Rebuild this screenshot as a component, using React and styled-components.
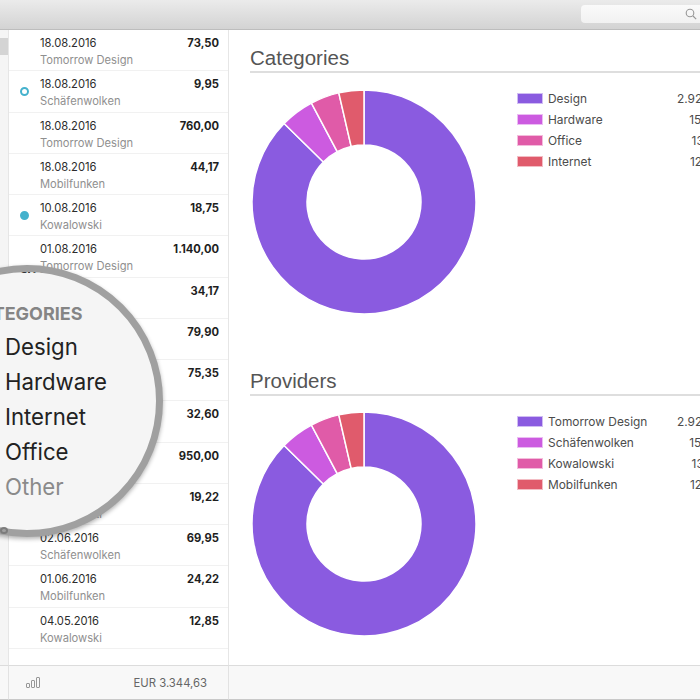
import React from "react";
import styled, { createGlobalStyle } from "styled-components";

const Global = createGlobalStyle`
  html, body { margin: 0; padding: 0; background: #fff; }
  body { font-family: "Inter", "Liberation Sans", sans-serif; -webkit-font-smoothing: antialiased; }
  #root { width: 700px; height: 700px; overflow: hidden; position: relative; }
`;

const Window = styled.div`
  width: 700px;
  height: 700px;
  display: grid;
  grid-template-columns: 9px 220px 1fr;
  grid-template-rows: 30px 635px 35px;
  position: relative;
  overflow: hidden;
`;

const Toolbar = styled.header`
  grid-column: 1 / -1;
  display: flex;
  justify-content: flex-end;
  align-items: flex-start;
  padding-top: 5px;
  box-sizing: border-box;
  background: linear-gradient(#ebebeb, #d3d3d3);
  border-bottom: 1px solid #bdbdbd;
`;

const SearchField = styled.div`
  width: 119px;
  height: 18px;
  padding-right: 3px;
  box-sizing: border-box;
  display: flex;
  align-items: center;
  justify-content: flex-end;
  background: linear-gradient(#fafafa, #f1f1f1);
  border-radius: 4px 0 0 4px;
  color: #979797;
`;

const Sidebar = styled.aside`
  background: #f5f5f5;
  border-right: 1px solid #e6e6e6;
  padding-top: 8px;
  box-sizing: border-box;
`;

const SidebarMark = styled.div`
  width: 8px;
  height: 17px;
  background: #d4d4d4;
`;

const List = styled.section`
  border-right: 1px solid #e6e6e6;
  box-sizing: border-box;
  background: #fff;
`;

const Row = styled.div`
  height: 41.26px;
  box-sizing: border-box;
  padding: 6px 9px 0 31px;
  border-bottom: 1px solid #f1f1f1;
  display: grid;
  grid-template-columns: 1fr auto;
  align-content: start;
  position: relative;
`;

const RowDate = styled.div`
  font-size: 11.2px;
  line-height: 14px;
  color: #2c2c2c;
`;

const RowAmount = styled.div`
  font-size: 11.2px;
  line-height: 14px;
  font-weight: 700;
  color: #1e1e1e;
`;

const RowVendor = styled.div`
  grid-column: 1 / -1;
  font-size: 11.15px;
  line-height: 14px;
  margin-top: 3px;
  color: #8f8f8f;
`;

const StatusDot = styled.span`
  position: absolute;
  left: 11px;
  top: 16px;
  width: 9px;
  height: 9px;
  box-sizing: border-box;
  border-radius: 50%;
  border: 2px solid #45b2cd;
  background: ${(p) => (p.$filled ? "#45b2cd" : "#fff")};
`;

const Detail = styled.main`
  padding: 16px 0 0 21px;
  box-sizing: border-box;
  overflow: hidden;
  background: #fff;
`;

const ChartBlock = styled.section`
  height: 322.5px;
`;

const ChartTitle = styled.h2`
  margin: 0;
  font-family: "Liberation Sans", sans-serif;
  font-weight: 400;
  font-size: 20.5px;
  line-height: 24px;
  color: #555;
  padding-bottom: 1px;
  border-bottom: 2px solid #dedede;
`;

const ChartBody = styled.div`
  display: flex;
  align-items: flex-start;
  padding-top: 14.5px;
`;

const Legend = styled.ul`
  list-style: none;
  margin: 0 0 0 39px;
  padding: 4px 0 0;
  width: 210px;
  flex: none;
  display: flex;
  flex-direction: column;
  gap: 7px;
`;

const LegendRow = styled.li`
  display: flex;
  align-items: center;
  height: 14px;
  font-size: 11.9px;
  color: #4c4c4c;
  white-space: nowrap;
`;

const Swatch = styled.span`
  width: 26px;
  height: 11px;
  margin-right: 5px;
  flex: none;
  box-sizing: border-box;
  background: ${(p) => p.$color};
  background-clip: padding-box;
  border: 1px solid ${(p) => p.$color}66;
`;

const LegendValue = styled.span`
  margin-left: auto;
`;

const FooterCell = styled.div`
  background: #f8f8f8;
  border-top: 1px solid #dcdcdc;
  border-right: 1px solid #e2e2e2;
  border-bottom: 1px solid #c9c9c9;
  box-sizing: border-box;
`;

const FooterList = styled(FooterCell)`
  display: flex;
  align-items: center;
  justify-content: space-between;
  padding: 0 21px 0 17px;
  font-size: 11.3px;
  color: #666;
`;

const FooterRest = styled(FooterCell)`
  border-right: none;
`;

const Magnifier = styled.aside`
  position: absolute;
  left: -109px;
  top: 265px;
  width: 272px;
  height: 272px;
  box-sizing: border-box;
  border-radius: 50%;
  border: 7px solid #a0a0a0;
  background: #f5f5f5;
  box-shadow: 0 2px 4px rgba(0, 0, 0, 0.3);
  padding-left: 70px;
  white-space: nowrap;
  overflow: hidden;
`;

const MagnifierHeading = styled.div`
  font-size: 18px;
  line-height: 24px;
  font-weight: 700;
  color: #858585;
  margin: 20px 0 3px;
`;

const MagnifierItem = styled.div`
  font-size: 22.2px;
  line-height: 35px;
  padding-left: 37px;
  color: ${(p) => (p.$muted ? "#8a8a8a" : "#222")};
`;

const MagnifierClippedItem = styled(MagnifierItem)`
  margin-top: -25px;
`;

const EdgeGlyph = styled.span`
  position: absolute;
  left: 0;
  top: 527px;
  width: 8px;
  height: 7px;
  box-sizing: border-box;
  border-radius: 50%;
  border: 2px solid #7c7c7c;
`;

const COLORS = ["#8a5be0", "#cc5be0", "#e05ba8", "#e05b6c"];
const STOPS = [0, 314.5, 332, 347, 360];

const rows = [
  ["18.08.2016", "Tomorrow Design", "73,50"],
  ["18.08.2016", "Schäfenwolken", "9,95", "ring"],
  ["18.08.2016", "Tomorrow Design", "760,00"],
  ["18.08.2016", "Mobilfunken", "44,17"],
  ["10.08.2016", "Kowalowski", "18,75", "dot"],
  ["01.08.2016", "Tomorrow Design", "1.140,00"],
  ["01.08.2016", "Mobilfunken", "34,17"],
  ["28.07.2016", "Schäfenwolken", "79,90"],
  ["18.07.2016", "Tomorrow Design", "75,35"],
  ["02.07.2016", "Kowalowski", "32,60"],
  ["01.07.2016", "Tomorrow Design", "950,00"],
  ["18.06.2016", "Kowalowski", "19,22"],
  ["02.06.2016", "Schäfenwolken", "69,95"],
  ["01.06.2016", "Mobilfunken", "24,22"],
  ["04.05.2016", "Kowalowski", "12,85"],
];

const polar = (r, deg) => {
  const a = (deg * Math.PI) / 180;
  return [114 + r * Math.sin(a), 114 - r * Math.cos(a)];
};

const slicePath = (from, to, R = 112, r = 57) => {
  const [x1, y1] = polar(R, from);
  const [x2, y2] = polar(R, to);
  const [x3, y3] = polar(r, to);
  const [x4, y4] = polar(r, from);
  const large = to - from > 180 ? 1 : 0;
  return `M${x1} ${y1}A${R} ${R} 0 ${large} 1 ${x2} ${y2}L${x3} ${y3}A${r} ${r} 0 ${large} 0 ${x4} ${y4}Z`;
};

const Donut = () => (
  <svg width="228" height="228" viewBox="0 0 228 228" style={{ flex: "none", display: "block" }}>
    {COLORS.map((c, i) => (
      <path key={c} d={slicePath(STOPS[i], STOPS[i + 1])} fill={c} stroke="#fff" strokeWidth="1.5" />
    ))}
  </svg>
);

const Chart = ({ title, items }) => (
  <ChartBlock>
    <ChartTitle>{title}</ChartTitle>
    <ChartBody>
      <Donut />
      <Legend>
        {items.map(([name, value], i) => (
          <LegendRow key={name}>
            <Swatch $color={COLORS[i]} />
            {name}
            <LegendValue>{value}</LegendValue>
          </LegendRow>
        ))}
      </Legend>
    </ChartBody>
  </ChartBlock>
);

const SearchIcon = () => (
  <svg width="12" height="12" viewBox="0 0 12 12" fill="none" stroke="currentColor" strokeWidth="1.1">
    <circle cx="5" cy="5" r="3.8" />
    <path d="M8 8l3.2 3.2" />
  </svg>
);

const BarsIcon = () => (
  <svg width="14" height="11" viewBox="0 0 14 11" fill="none" stroke="#979797" strokeWidth="1">
    <rect x="0.5" y="6.5" width="3" height="4" rx="0.5" />
    <rect x="5.5" y="3.5" width="3" height="7" rx="0.5" />
    <rect x="10.5" y="0.5" width="3" height="10" rx="0.5" />
  </svg>
);

export default function App() {
  return (
    <Window>
      <Global />
      <Toolbar>
        <SearchField>
          <SearchIcon />
        </SearchField>
      </Toolbar>
      <Sidebar>
        <SidebarMark />
      </Sidebar>
      <List>
        {rows.map(([date, vendor, amount, status], i) => (
          <Row key={i}>
            {status && <StatusDot $filled={status === "dot"} />}
            <RowDate>{date}</RowDate>
            <RowAmount>{amount}</RowAmount>
            <RowVendor>{vendor}</RowVendor>
          </Row>
        ))}
      </List>
      <Detail>
        <Chart
          title="Categories"
          items={[
            ["Design", "2.923,35"],
            ["Hardware", "158,40"],
            ["Office", "137,60"],
            ["Internet", "125,28"],
          ]}
        />
        <Chart
          title="Providers"
          items={[
            ["Tomorrow Design", "2.923,35"],
            ["Schäfenwolken", "158,40"],
            ["Kowalowski", "137,60"],
            ["Mobilfunken", "125,28"],
          ]}
        />
      </Detail>
      <FooterCell />
      <FooterList>
        <BarsIcon />
        <span>EUR 3.344,63</span>
      </FooterList>
      <FooterRest />
      <Magnifier>
        <MagnifierClippedItem>Paid</MagnifierClippedItem>
        <MagnifierHeading>CATEGORIES</MagnifierHeading>
        <MagnifierItem>Design</MagnifierItem>
        <MagnifierItem>Hardware</MagnifierItem>
        <MagnifierItem>Internet</MagnifierItem>
        <MagnifierItem>Office</MagnifierItem>
        <MagnifierItem $muted>Other</MagnifierItem>
      </Magnifier>
      <EdgeGlyph />
    </Window>
  );
}
